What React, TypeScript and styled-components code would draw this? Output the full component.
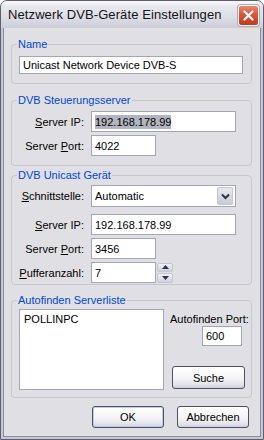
import React from "react";
import styled, { createGlobalStyle } from "styled-components";

const Global = createGlobalStyle`
  html, body { margin: 0; padding: 0; background: #ffffff; }
  body {
    font-family: "Liberation Sans", Arial, sans-serif;
    font-size: 11px;
    color: #000;
  }
  * { box-sizing: border-box; }
`;

const Window = styled.div`
  width: 264px;
  height: 440px;
  display: flex;
  flex-direction: column;
  background: #c6c6d4;
  border: 1px solid #5e5e72;
  border-radius: 7px 7px 0 0;
  overflow: hidden;
`;

const TitleBar = styled.div`
  height: 27px;
  flex: none;
  display: flex;
  align-items: center;
  justify-content: space-between;
  padding: 0 4px 0 7px;
  background: linear-gradient(
    #fbfbfd 0%,
    #e8e8ef 18%,
    #dedee7 60%,
    #cdcdd9 100%
  );
`;

const Title = styled.span`
  font-size: 13px;
  color: #141414;
  letter-spacing: 0.1px;
`;

const CloseButton = styled.button`
  width: 21px;
  height: 21px;
  padding: 0;
  margin-top: 1px;
  border: 1px solid #ffffff;
  border-radius: 3px;
  background: linear-gradient(#ea8a70 0%, #d9553a 45%, #c23a1e 100%);
  display: flex;
  align-items: center;
  justify-content: center;
  box-shadow: 0 0 0 1px #b9a9a9;
`;

const Client = styled.div`
  flex: 1;
  margin: 0 2px 2px;
  border: 1px solid #8a8aa0;
  border-top: none;
  background: #e0dfe3;
  padding: 10px 8px 0 7px;
  display: flex;
  flex-direction: column;
`;

const Group = styled.fieldset<{ $top: number; $pt: number; $pb: number }>`
  margin: ${(p) => p.$top}px 0 0;
  padding: ${(p) => p.$pt}px 0 ${(p) => p.$pb}px;
  border: 1px solid #c6c6d0;
  border-radius: 4px;
  min-width: 0;
`;

const Caption = styled.legend`
  margin-left: 5px;
  padding: 0 1px;
  color: #0046d5;
  font-size: 11px;
  line-height: 13px;
`;

const Form = styled.div`
  display: grid;
  grid-template-columns: 72px auto;
  column-gap: 7px;
  row-gap: 3px;
  align-items: center;
  justify-items: start;
`;

const Label = styled.label<{ $after?: number }>`
  justify-self: end;
  white-space: nowrap;
  margin-bottom: ${(p) => p.$after || 0}px;
`;

const Field = styled.div<{ $w: number; $h?: number }>`
  width: ${(p) => p.$w}px;
  height: ${(p) => p.$h || 21}px;
  background: #ffffff;
  border: 1px solid #a2a6b6;
  padding: 0 3px;
  display: flex;
  align-items: center;
  white-space: nowrap;
`;

const NameField = styled(Field)`
  margin-left: 7px;
`;

const Selected = styled.span`
  background: #b2b4bf;
  line-height: 14px;
`;

const Combo = styled(Field)`
  justify-content: space-between;
  padding-right: 2px;
  margin-bottom: 4px;
`;

const DropButton = styled.span`
  width: 16px;
  height: 18px;
  border: 1px solid #c3c5d3;
  border-radius: 2px;
  background: linear-gradient(#e9e9f0, #c9cad8);
  display: flex;
  align-items: center;
  justify-content: center;
`;

const SpinWrap = styled.div`
  display: flex;
  align-items: center;
  gap: 1px;
`;

const Spinner = styled.div`
  width: 16px;
  height: 20px;
  display: flex;
  flex-direction: column;
  gap: 1px;
`;

const SpinButton = styled.span`
  flex: 1;
  border: 1px solid #c3c5d3;
  border-radius: 2px;
  background: linear-gradient(#f0f0f5, #cfd0dc);
  display: flex;
  align-items: center;
  justify-content: center;
`;

const FinderBody = styled.div`
  display: flex;
  align-items: flex-start;
`;

const ServerList = styled.div`
  width: 145px;
  height: 81px;
  margin-left: 7px;
  background: #ffffff;
  border: 1px solid #a2a6b6;
  padding: 3px 4px;
  line-height: 13px;
`;

const FinderSide = styled.div`
  width: 81px;
  margin-left: 6px;
  display: flex;
  flex-direction: column;
  align-items: flex-start;
`;

const SideLabel = styled.div`
  margin-top: 3px;
  line-height: 14px;
  white-space: nowrap;
`;

const PortField = styled(Field)`
  margin-left: 32px;
`;

const PushButton = styled.button<{ $w: number; $default?: boolean }>`
  width: ${(p) => p.$w}px;
  height: 22px;
  padding: 0;
  font-family: inherit;
  font-size: 11px;
  color: #000;
  border: 1px solid #4f4f66;
  border-radius: 3px;
  background: linear-gradient(#ffffff 0%, #f4f4f7 55%, #e2e2ea 85%, #cfcfd9 100%);
  box-shadow: ${(p) =>
    p.$default ? "inset 0 0 0 1px #c0c8e6" : "inset 0 -1px 0 #d0d0da"};
`;

const SearchButton = styled(PushButton)`
  height: 23px;
  margin: 20px 0 0 2px;
`;

const Footer = styled.div`
  display: flex;
  justify-content: flex-end;
  gap: 13px;
  margin: 8px 3px 0 0;
`;

const Chevron = () => (
  <svg width="9" height="7" viewBox="0 0 9 7">
    <path d="M1 1.5 L4.5 5 L8 1.5" fill="none" stroke="#33334a" strokeWidth="2" />
  </svg>
);

const Triangle = ({ up }: { up?: boolean }) => (
  <svg width="7" height="4" viewBox="0 0 7 4">
    <path d={up ? "M0 4 L3.5 0 L7 4 Z" : "M0 0 L3.5 4 L7 0 Z"} fill="#33334a" />
  </svg>
);

export default function App() {
  return (
    <>
      <Global />
      <Window>
        <TitleBar>
          <Title>Netzwerk DVB-Geräte Einstellungen</Title>
          <CloseButton aria-label="Schließen">
            <svg width="11" height="11" viewBox="0 0 11 11">
              <path d="M1.5 1.5 L9.5 9.5 M9.5 1.5 L1.5 9.5" stroke="#ffffff" strokeWidth="2.2" strokeLinecap="round" />
            </svg>
          </CloseButton>
        </TitleBar>
        <Client>
          <Group $top={0} $pt={5} $pb={9}>
            <Caption>Name</Caption>
            <NameField $w={224} $h={18}>Unicast Network Device DVB-S</NameField>
          </Group>

          <Group $top={10} $pt={4} $pb={9}>
            <Caption>DVB Steuerungsserver</Caption>
            <Form>
              <Label><u>S</u>erver IP:</Label>
              <Field $w={145}><Selected>192.168.178.99</Selected></Field>
              <Label>Server <u>P</u>ort:</Label>
              <Field $w={65}>4022</Field>
            </Form>
          </Group>

          <Group $top={3} $pt={3} $pb={1}>
            <Caption>DVB Unicast Gerät</Caption>
            <Form>
              <Label $after={4}><u>S</u>chnittstelle:</Label>
              <Combo $w={145} $h={22}>
                Automatic
                <DropButton><Chevron /></DropButton>
              </Combo>
              <Label><u>S</u>erver IP:</Label>
              <Field $w={145}>192.168.178.99</Field>
              <Label>Server <u>P</u>ort:</Label>
              <Field $w={65}>3456</Field>
              <Label><u>P</u>ufferanzahl:</Label>
              <SpinWrap>
                <Field $w={65}>7</Field>
                <Spinner>
                  <SpinButton><Triangle up /></SpinButton>
                  <SpinButton><Triangle /></SpinButton>
                </Spinner>
              </SpinWrap>
            </Form>
          </Group>

          <Group $top={9} $pt={2} $pb={7}>
            <Caption>Autofinden Serverliste</Caption>
            <FinderBody>
              <ServerList>POLLINPC</ServerList>
              <FinderSide>
                <SideLabel>Autofinden Port:</SideLabel>
                <PortField $w={40} $h={20}>600</PortField>
                <SearchButton $w={73}>Suche</SearchButton>
              </FinderSide>
            </FinderBody>
          </Group>

          <Footer>
            <PushButton $w={72} $default>OK</PushButton>
            <PushButton $w={72}>Abbrechen</PushButton>
          </Footer>
        </Client>
      </Window>
    </>
  );
}
